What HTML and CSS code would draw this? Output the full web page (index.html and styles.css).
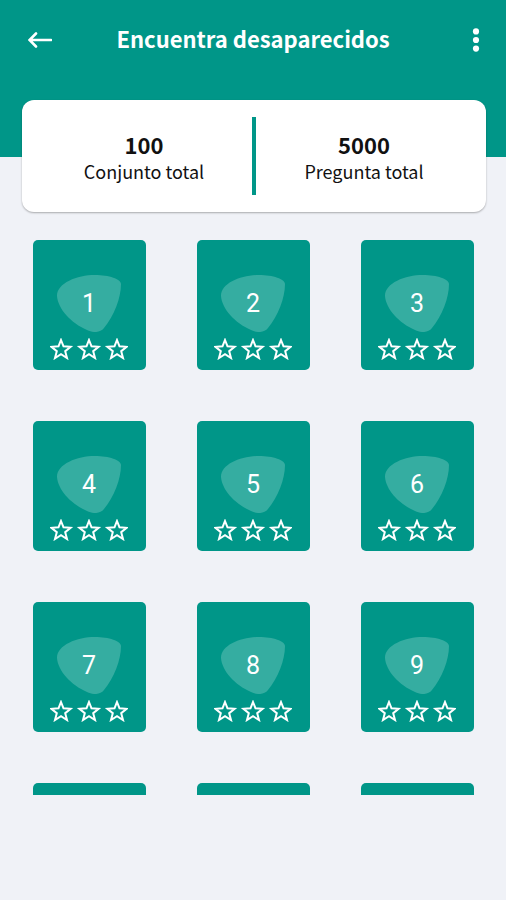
FILE: index.html
```html
<!DOCTYPE html>
<html lang="es">

<head>
    <meta charset="UTF-8">
    <meta name="viewport" content="width=device-width, initial-scale=1.0">
    <title>Encuentra desaparecidos</title>
    <link rel="stylesheet" href="styles.css">
</head>

<body>
    <svg class="symbols" aria-hidden="true">
        <symbol id="badge" viewBox="0 0 64 57">
            <path d="M0 21C0 8 20 0 38 0C52 0 64 4 64 9C64 23 57 41 47 53C43 58 36 58 30 55C14 48 1 34 0 21Z" />
        </symbol>
        <symbol id="stars" viewBox="0 0 78 22">
            <path id="star" d="M11 2L13.5 8.3L20.6 8.8L15.2 13.2L17 20L11 16.2L5 20L6.8 13.2L1.4 8.8L8.5 8.3Z" />
            <use href="#star" x="28" />
            <use href="#star" x="56" />
        </symbol>
    </svg>

    <header class="header">
        <div class="toolbar">
            <button type="button" class="icon-btn" aria-label="Volver">
                <svg class="arrow" width="24" height="16" viewBox="0 0 24 16">
                    <path d="M8 1.5L1.5 8L8 14.5M2 8H23" />
                </svg>
            </button>
            <h1>Encuentra desaparecidos</h1>
            <button type="button" class="icon-btn menu-btn" aria-label="Opciones">
                <svg class="dots" width="8" height="24" viewBox="0 0 8 24">
                    <circle cx="4" cy="3.4" r="3.1" />
                    <circle cx="4" cy="12" r="3.1" />
                    <circle cx="4" cy="20.6" r="3.1" />
                </svg>
            </button>
        </div>
    </header>

    <section class="totals">
        <div class="total">
            <strong>100</strong>
            <span>Conjunto total</span>
        </div>
        <div class="divider"></div>
        <div class="total">
            <strong>5000</strong>
            <span>Pregunta total</span>
        </div>
    </section>

    <main class="levels" id="levels"></main>

    <script>
        const levels = document.getElementById("levels");

        for (let i = 1; i <= 12; i++) {
            levels.innerHTML += `
                <button type="button" class="level">
                    <span class="badge">
                        <svg><use href="#badge"></use></svg>
                        <span class="number">${i}</span>
                    </span>
                    <svg class="stars"><use href="#stars"></use></svg>
                </button>`;
        }
    </script>
</body>

</html>
```

FILE: styles.css
```css
* {
    box-sizing: border-box;
}

body {
    display: flex;
    flex-direction: column;
    height: 100vh;
    margin: 0;
    padding-bottom: 105px;
    background-color: #f0f2f7;
    font-family: "Noto Sans CJK JP", "Noto Sans", sans-serif;
    color: #111;
}

button {
    padding: 0;
    border: none;
    background: none;
    cursor: pointer;
}

.symbols {
    display: none;
}

.header {
    flex: none;
    height: 157px;
    padding: 16px 18px;
    background-color: #009688;
    color: white;
}

.toolbar {
    display: flex;
    align-items: center;
    justify-content: space-between;
    height: 48px;
}

.toolbar h1 {
    margin: 0;
    padding-bottom: 4px;
    font-size: 22px;
    line-height: 32px;
    font-weight: bold;
}

.icon-btn {
    display: flex;
    align-items: center;
    justify-content: center;
    width: 44px;
    height: 44px;
}

.menu-btn {
    justify-content: flex-end;
    padding-right: 8px;
}

.arrow {
    fill: none;
    stroke: white;
    stroke-width: 2.6;
    stroke-linecap: round;
}

.dots {
    fill: white;
}

.totals {
    flex: none;
    display: flex;
    align-items: center;
    height: 112px;
    margin: -57px 20px 0 22px;
    padding: 0 14px;
    border-radius: 12px;
    background-color: white;
    box-shadow: 0 1px 2px rgba(0, 0, 0, 0.3);
}

.total {
    flex: 1;
    display: flex;
    flex-direction: column;
    align-items: center;
    padding-top: 2px;
}

.total strong {
    font-size: 22px;
    line-height: 28px;
}

.total span {
    font-size: 18px;
    line-height: 26px;
}

.divider {
    width: 4px;
    height: 78px;
    background-color: #009688;
}

.levels {
    flex: 1;
    display: grid;
    grid-template-columns: repeat(3, 1fr);
    grid-auto-rows: 130px;
    gap: 51px;
    margin-top: 28px;
    padding: 0 32px 0 33px;
    overflow-y: auto;
    scrollbar-width: none;
}

.level {
    display: flex;
    flex-direction: column;
    align-items: center;
    padding: 35px 1px 0 0;
    border-radius: 5px;
    background-color: #009688;
}

.badge {
    display: grid;
    place-items: center;
}

.badge svg,
.number {
    grid-area: 1 / 1;
}

.badge svg {
    width: 64px;
    height: 57px;
    fill: #35ada1;
}

.number {
    font-family: Roboto, sans-serif;
    font-size: 25px;
    line-height: 28px;
    color: white;
}

.stars {
    width: 78px;
    height: 22px;
    margin-top: 6px;
    fill: none;
    stroke: white;
    stroke-width: 2;
}
```
